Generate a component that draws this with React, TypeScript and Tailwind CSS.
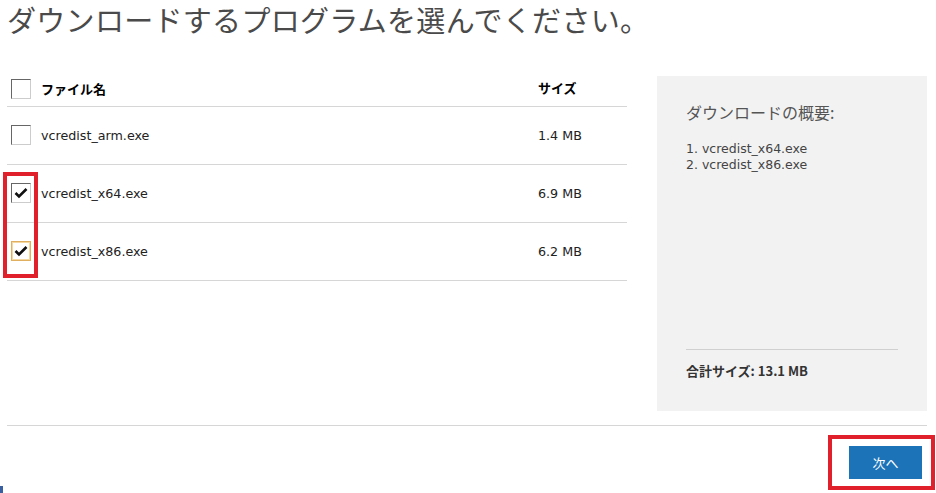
import React from "react";

const jp = '"Noto Sans CJK JP", sans-serif';
const lat = '"DejaVu Sans", "Noto Sans CJK JP", sans-serif';

function Box({ checked, focus }: { checked?: boolean; focus?: boolean }) {
  return (
    <div
      className={`w-[20px] h-[20px] shrink-0 flex items-center justify-center bg-white border ${
        focus ? "border-[#e0b060] shadow-[inset_0_0_0_1px_#f4d8a0]" : "border-t-[#666] border-l-[#666] border-r-[#ccc] border-b-[#ccc]"
      }`}
    >
      {checked && (
        <svg width="14" height="12" viewBox="0 0 14 12">
          <path d="M1.5 6 L5 9.5 L12.5 2" fill="none" stroke="#111" strokeWidth="2.6" />
        </svg>
      )}
    </div>
  );
}

const rows = [
  { name: "vcredist_arm.exe", size: "1.4 MB", checked: false },
  { name: "vcredist_x64.exe", size: "6.9 MB", checked: true },
  { name: "vcredist_x86.exe", size: "6.2 MB", checked: true, focus: true },
];

export default function App() {
  return (
    <div className="w-[936px] h-[493px] bg-white relative overflow-hidden text-[#222]">
      <h1
        className="pl-[7px] pt-0 h-[76px] text-[29px] leading-[38px] text-[#4a4a4a] font-normal tracking-[0.3px]"
        style={{ fontFamily: jp }}
      >
        ダウンロードするプログラムを選んでください。
      </h1>
      <div className="flex">
        <div className="ml-[7px] w-[620px]">
          <div className="h-[31px] flex items-start pt-[3px] border-b border-[#d6d6d6] relative">
            <div className="pl-[4px]">
              <Box />
            </div>
            <span className="ml-[10px] text-[13px] leading-[20px] font-bold text-black" style={{ fontFamily: jp }}>
              ファイル名
            </span>
            <span className="absolute left-[531px] top-[2px] text-[13px] font-bold text-black" style={{ fontFamily: jp }}>
              サイズ
            </span>
          </div>
          {rows.map((r) => (
            <div key={r.name} className="h-[58px] flex items-center border-b border-[#d6d6d6] relative">
              <div className="pl-[4px] pb-[2px]">
                <Box checked={r.checked} focus={r.focus} />
              </div>
              <span className="ml-[10px] text-[12.7px] text-[#222]" style={{ fontFamily: lat }}>
                {r.name}
              </span>
              <span className="absolute left-[531px] text-[12.7px] text-[#222]" style={{ fontFamily: lat }}>
                {r.size}
              </span>
            </div>
          ))}
        </div>
        <div className="ml-[30px] w-[270px] h-[335px] bg-[#f2f2f2] pl-[29px] pr-[29px] flex flex-col">
          <div className="mt-[24px] text-[16px] text-[#555]" style={{ fontFamily: jp }}>
            ダウンロードの概要:
          </div>
          <ol className="mt-[17px] text-[12.5px] leading-[16px] text-[#444]" style={{ fontFamily: lat }}>
            <li>1. vcredist_x64.exe</li>
            <li>2. vcredist_x86.exe</li>
          </ol>
          <div className="mt-auto border-t border-[#d0d0d0] mb-[31px] pt-[11px] text-[13px] font-bold text-[#333]" style={{ fontFamily: jp }}>
            合計サイズ: 13.1 MB
          </div>
        </div>
      </div>
      <div className="mx-[7px] mt-[14px] border-t border-[#d6d6d6] w-[920px]" />
      <div className="flex justify-end pr-[1px] mt-[9px]">
        <div className="border-[4px] border-[#e0202a] w-[107px] h-[55px] flex items-center justify-center">
          <button
            className="w-[73px] h-[33px] bg-[#1c73b8] text-white text-[13px] ml-[14px] mr-[6px]"
            style={{ fontFamily: jp }}
          >
            次へ
          </button>
        </div>
      </div>
      <div className="absolute left-[3px] top-[172px] w-[35px] h-[106px] border-[4px] border-[#e0202a]" />
      <div className="absolute left-0 top-[486px] w-[3px] h-[7px] bg-[#3a5fa0]" />
    </div>
  );
}
